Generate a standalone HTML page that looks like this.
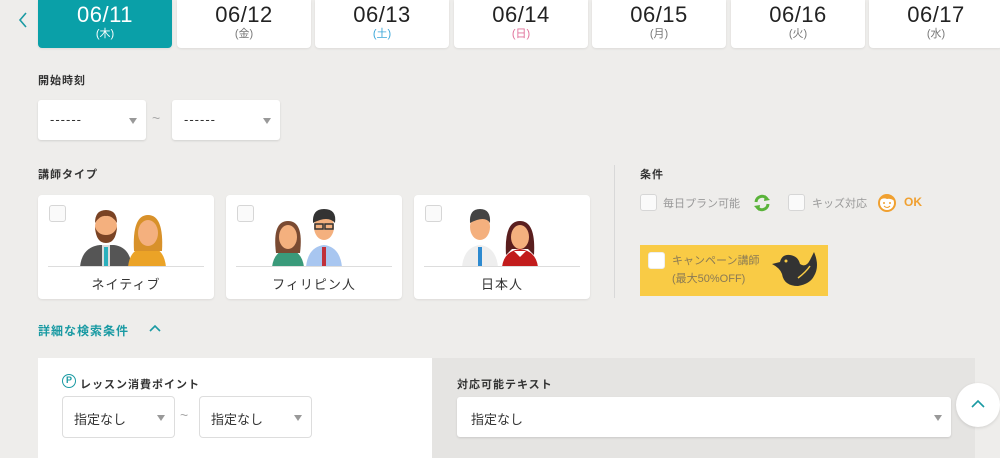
<!DOCTYPE html>
<html><head><meta charset="utf-8">
<style>
*{box-sizing:border-box;margin:0;padding:0}
body{width:1000px;height:456px;overflow:hidden;background:#eeedeb;font-family:"Liberation Sans","Noto Sans CJK JP",sans-serif;position:relative;color:#333}
.a{position:absolute}
.tab{position:absolute;top:0;height:48px;width:134px;background:#fff;border-radius:0 0 4px 4px;text-align:center;box-shadow:0 1px 2px rgba(0,0,0,.08)}
.tab .d{font-size:22px;line-height:22px;margin-top:4px;letter-spacing:.5px;color:#222}
.tab .w{font-size:11px;line-height:14px;color:#777;margin-top:1px}
.sel{position:absolute;background:#fff;border-radius:3px;box-shadow:0 1px 2px rgba(0,0,0,.12);font-size:13px;color:#333}
.sel:after{content:"";position:absolute;right:9px;top:50%;margin-top:-2px;border-left:4px solid transparent;border-right:4px solid transparent;border-top:6px solid #999}
.lbl{position:absolute;font-size:11px;font-weight:bold;letter-spacing:1px;color:#333}
.card{position:absolute;top:195px;width:176px;height:104px;background:#fff;border-radius:4px;box-shadow:0 1px 2px rgba(0,0,0,.08)}
.cb{position:absolute;width:17px;height:17px;border:1px solid #d6d6d6;border-radius:3px;background:#fafafa}
.card .line{position:absolute;left:10px;right:10px;top:71px;height:1px;background:#ddd}
.card .t{position:absolute;left:0;right:0;top:79px;text-align:center;font-size:13px;letter-spacing:1px}
.tl{position:absolute;color:#aaa;font-size:14px}
</style></head><body>

<svg class="a" style="left:17px;top:11px" width="12" height="18"><path d="M9 2 L3 9 L9 16" stroke="#1a9aa3" stroke-width="1.6" fill="none"/></svg>

<div class="tab" style="left:38px;background:#0aa0a8"><div class="d" style="color:#fff">06/11</div><div class="w" style="color:#fff">(木)</div></div>
<div class="tab" style="left:177px"><div class="d">06/12</div><div class="w">(金)</div></div>
<div class="tab" style="left:315px"><div class="d">06/13</div><div class="w" style="color:#3aa6d8">(土)</div></div>
<div class="tab" style="left:454px"><div class="d">06/14</div><div class="w" style="color:#e0709a">(日)</div></div>
<div class="tab" style="left:592px"><div class="d">06/15</div><div class="w">(月)</div></div>
<div class="tab" style="left:731px"><div class="d">06/16</div><div class="w">(火)</div></div>
<div class="tab" style="left:869px"><div class="d">06/17</div><div class="w">(水)</div></div>

<div class="lbl" style="left:38px;top:72px">開始時刻</div>
<div class="sel" style="left:38px;top:100px;width:108px;height:40px;padding:12px 0 0 12px;letter-spacing:1px">------</div>
<div class="tl" style="left:152px;top:110px">~</div>
<div class="sel" style="left:172px;top:100px;width:108px;height:40px;padding:12px 0 0 12px;letter-spacing:1px">------</div>

<div class="lbl" style="left:38px;top:166px">講師タイプ</div>

<div class="card" style="left:38px"><div class="cb" style="left:11px;top:10px"></div>
<svg class="a" style="left:40px;top:10px" width="95" height="62">
<path d="M2 62 Q4 42 22 40 L36 40 Q52 42 54 62Z" fill="#555"/><rect x="24" y="40" width="8" height="22" fill="#ddd"/><rect x="26" y="42" width="4" height="20" fill="#2bb0bd"/>
<ellipse cx="28" cy="22" rx="11" ry="13" fill="#f4b07e"/><path d="M17 22 Q18 38 28 38 Q38 38 39 22 Q36 30 28 30 Q20 30 17 22Z" fill="#7a4324"/><path d="M17 18 Q17 5 28 5 Q39 5 39 18 Q34 10 28 11 Q22 10 17 18Z" fill="#7a4324"/>
<path d="M50 62 Q52 42 70 42 Q86 42 88 62Z" fill="#eba327"/><path d="M56 46 Q54 10 70 10 Q86 10 84 46Z" fill="#d8912a"/><ellipse cx="70" cy="28" rx="10" ry="13" fill="#f4b07e"/>
</svg>
<div class="line"></div><div class="t">ネイティブ</div></div>

<div class="card" style="left:226px"><div class="cb" style="left:11px;top:10px"></div>
<svg class="a" style="left:42px;top:10px" width="95" height="62">
<path d="M4 62 Q6 46 20 44 Q34 46 36 62Z" fill="#3a9a7a"/><path d="M8 48 Q4 16 20 16 Q36 16 32 48Z" fill="#7a4a32"/><ellipse cx="20" cy="32" rx="9" ry="12" fill="#f4b07e"/>
<path d="M38 62 Q40 42 56 40 Q72 42 74 62Z" fill="#a8c6f0"/><rect x="54" y="42" width="4" height="20" fill="#c0303a"/>
<ellipse cx="56" cy="22" rx="10" ry="13" fill="#f4b07e"/><path d="M45 18 Q44 4 56 4 Q69 4 67 18 Q60 10 45 18Z" fill="#333"/><rect x="47" y="19" width="8" height="5" fill="none" stroke="#333" stroke-width="1.5"/><rect x="57" y="19" width="8" height="5" fill="none" stroke="#333" stroke-width="1.5"/>
</svg>
<div class="line"></div><div class="t">フィリピン人</div></div>

<div class="card" style="left:414px"><div class="cb" style="left:11px;top:10px"></div>
<svg class="a" style="left:46px;top:10px" width="95" height="62">
<path d="M2 62 Q4 42 20 40 Q36 42 38 62Z" fill="#eee"/><rect x="18" y="42" width="4" height="20" fill="#2d8ad0"/>
<ellipse cx="20" cy="22" rx="10" ry="13" fill="#f4b07e"/><path d="M10 18 Q9 4 20 4 Q31 4 30 18 Q25 10 10 18Z" fill="#444"/>
<path d="M42 62 Q44 46 60 44 Q76 46 78 62Z" fill="#c21c1c"/><path d="M54 46 L60 52 L66 46Z" fill="#fff"/><path d="M46 50 Q44 16 60 16 Q76 16 74 50 L68 44 L52 44Z" fill="#5a1e1e"/><ellipse cx="60" cy="32" rx="9" ry="12" fill="#f4b07e"/>
</svg>
<div class="line"></div><div class="t">日本人</div></div>

<div class="a" style="left:614px;top:165px;width:1px;height:133px;background:#d8d8d8"></div>
<div class="lbl" style="left:640px;top:166px">条件</div>
<div class="cb" style="left:640px;top:194px;width:17px;height:17px"></div>
<div class="a" style="left:663px;top:195px;font-size:11px;color:#999">毎日プラン可能</div>
<svg class="a" style="left:752px;top:193px" width="20" height="20"><path d="M4 9 A6 6 0 0 1 15 6" stroke="#5ab33a" stroke-width="3" fill="none"/><path d="M16 11 A6 6 0 0 1 5 14" stroke="#5ab33a" stroke-width="3" fill="none"/><path d="M13 2 L18 7 L12 8Z" fill="#5ab33a"/><path d="M7 18 L2 13 L8 12Z" fill="#5ab33a"/></svg>
<div class="cb" style="left:788px;top:194px"></div>
<div class="a" style="left:812px;top:195px;font-size:11px;color:#999">キッズ対応</div>
<svg class="a" style="left:876px;top:192px" width="22" height="20"><circle cx="11" cy="11" r="8" fill="#fff" stroke="#f0a030" stroke-width="2"/><path d="M3 9 Q6 2 11 3 Q16 2 19 9 Q14 6 11 7 Q7 5 3 9Z" fill="#f0a030"/><circle cx="8" cy="11" r="1" fill="#f0a030"/><circle cx="14" cy="11" r="1" fill="#f0a030"/><path d="M8 14 Q11 17 14 14" stroke="#f0a030" fill="none"/></svg>
<div class="a" style="left:904px;top:195px;font-size:12px;font-weight:bold;color:#f0a030">OK</div>

<div class="a" style="left:640px;top:245px;width:188px;height:51px;background:#f9cb45"></div>
<div class="cb" style="left:648px;top:252px;background:#fff;border-color:#eee"></div>
<div class="a" style="left:672px;top:252px;font-size:11px;color:#8a7a55;line-height:18px">キャンペーン講師<br>(最大50%OFF)</div>
<svg class="a" style="left:770px;top:250px" width="52" height="40"><path d="M2 14 L10 12 Q12 4 20 5 Q28 6 30 14 Q36 18 40 10 L44 2 Q50 16 44 26 Q40 34 28 36 Q14 36 12 24 Q10 18 2 14Z" fill="#333"/><circle cx="16" cy="11" r="1.5" fill="#f9cb45"/><path d="M28 28 Q36 22 40 16" stroke="#f9cb45" stroke-width="1.5" fill="none"/></svg>

<div class="a" style="left:38px;top:322px;font-size:12px;font-weight:bold;color:#1a9aa3;letter-spacing:1px">詳細な検索条件</div>
<svg class="a" style="left:148px;top:323px" width="14" height="10"><path d="M2 8 L7 3 L12 8" stroke="#1a9aa3" stroke-width="1.6" fill="none"/></svg>

<div class="a" style="left:38px;top:358px;width:394px;height:100px;background:#fff"></div>
<div class="a" style="left:432px;top:358px;width:543px;height:100px;background:#e5e4e2"></div>
<div class="a" style="left:62px;top:374px;width:14px;height:14px;border:1.5px solid #1a9aa3;border-radius:50%;font-size:9px;color:#1a9aa3;text-align:center;line-height:11px;font-weight:bold">P</div>
<div class="lbl" style="left:80px;top:376px">レッスン消費ポイント</div>
<div class="sel" style="left:63px;top:397px;width:111px;height:40px;padding:12px 0 0 11px;box-shadow:0 0 0 1px #ddd">指定なし</div>
<div class="tl" style="left:180px;top:407px">~</div>
<div class="sel" style="left:200px;top:397px;width:111px;height:40px;padding:12px 0 0 11px;box-shadow:0 0 0 1px #ddd">指定なし</div>
<div class="lbl" style="left:457px;top:376px">対応可能テキスト</div>
<div class="sel" style="left:457px;top:397px;width:494px;height:40px;padding:12px 0 0 14px">指定なし</div>
<div class="a" style="left:956px;top:383px;width:44px;height:44px;border-radius:50%;background:#fff;box-shadow:0 1px 3px rgba(0,0,0,.12)"></div>
<svg class="a" style="left:970px;top:398px" width="16" height="12"><path d="M2 9 L8 3 L14 9" stroke="#1a9aa3" stroke-width="1.6" fill="none"/></svg>
</body></html>
